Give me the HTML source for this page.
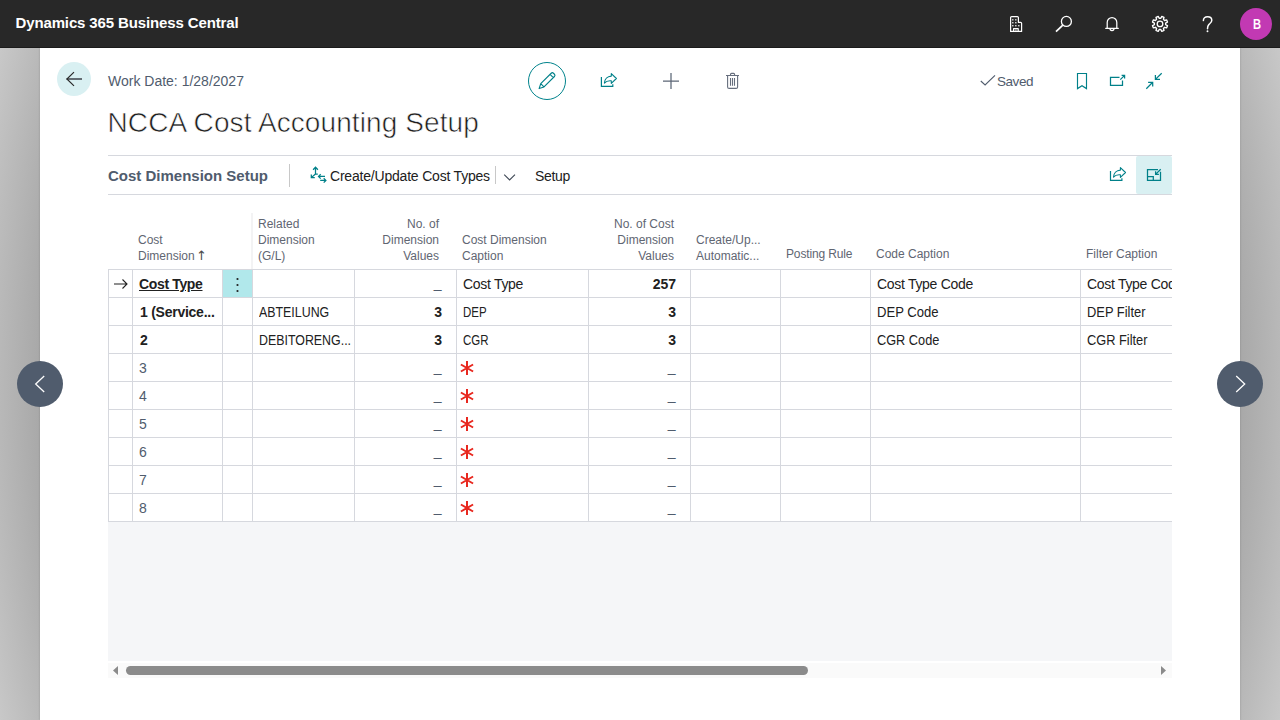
<!DOCTYPE html>
<html lang="en">
<head>
<meta charset="utf-8">
<title>NCCA Cost Accounting Setup - Dynamics 365 Business Central</title>
<style>
*{box-sizing:border-box;margin:0;padding:0}
html,body{width:1280px;height:720px;overflow:hidden}
body{position:relative;font-family:"Liberation Sans",sans-serif;font-size:14px;color:#212121;background:#b4b4b4}
.abs{position:absolute}
.t{position:absolute;white-space:nowrap;line-height:1;transform-origin:0 0}
.r{text-align:right}
#bg{left:0;top:48px;width:1280px;height:672px;
 background:radial-gradient(ellipse 680px 994px at 640px 336px,#a2a2a2 0%,#a2a2a2 86%,#a8a8a8 88.2%,#c8c8c8 100%,#cdcdcd 104%)}
#topbar{left:0;top:0;width:1280px;height:48px;background:#282828;border-bottom:1px solid #1b1b1b}
#panel{left:40px;top:48px;width:1200px;height:672px;background:#fff;box-shadow:0 0 2px rgba(0,0,0,.18)}
svg{position:absolute;overflow:visible}
.hl{background:#d6d8de;position:absolute}
.h{font-size:12px;color:#5f6672;line-height:16px;position:absolute;white-space:nowrap}
.c{font-size:14px;position:absolute;white-space:nowrap;line-height:1}
.b{font-weight:700}
.m{color:#505c6d}
.star{position:absolute;left:460px;width:14px;height:14px}
</style>
</head>
<body>
<div id="bg" class="abs"></div>
<div id="panel" class="abs"></div>
<div id="topbar" class="abs"></div>

<!-- TOPBAR -->
<div id="brand" class="t" style="left:15.5px;top:15px;font-size:15px;font-weight:700;letter-spacing:-.13px;color:#fff">Dynamics 365 Business Central</div>
<div class="abs" style="left:1240px;top:8px;width:32px;height:32px;border-radius:50%;background:#c239b3"></div>
<div id="avatar" class="t" style="left:1252.8px;top:17px;font-size:14px;font-weight:700;transform:scaleX(.8);color:#fff">B</div>

<!-- PAGE HEADER -->
<div class="abs" style="left:57px;top:62px;width:34px;height:34px;border-radius:50%;background:#d9f0f2"></div>
<div id="workdate" class="t" style="left:108px;top:74px;font-size:14px;color:#505c6d">Work Date: 1/28/2027</div>
<div id="title" class="t" style="left:107.5px;top:109px;font-size:28px;letter-spacing:.1px;color:#1e1e1e;-webkit-text-stroke:.6px #fff">NCCA Cost Accounting Setup</div>
<div class="abs" style="left:528px;top:62px;width:38px;height:38px;border-radius:50%;border:1px solid #00838c"></div>
<div id="saved" class="t" style="left:997px;top:75px;font-size:13.5px;letter-spacing:-.45px;color:#505c6d">Saved</div>

<!-- SUBHEADER -->
<div class="hl" style="left:108px;top:155px;width:1064px;height:1px"></div>
<div class="hl" style="left:108px;top:194px;width:1064px;height:1px"></div>
<div class="abs" style="left:1136px;top:156px;width:36px;height:38px;background:#d9f0f2;border-radius:2px"></div>
<div id="cds" class="t" style="left:108px;top:168px;font-size:15px;font-weight:700;color:#505c6d">Cost Dimension Setup</div>
<div class="abs" style="left:289px;top:164px;width:1px;height:23px;background:#c8c8c8"></div>
<div id="cuct" class="t" style="left:330px;top:169px;font-size:14px;letter-spacing:-.2px">Create/Update Cost Types</div>
<div class="abs" style="left:495px;top:166px;width:1px;height:18px;background:#c8c8c8"></div>
<div id="setup" class="t" style="left:535px;top:169px;font-size:14px;letter-spacing:-.3px">Setup</div>

<div id="gridwrap" class="abs" style="left:0;top:0;width:1172px;height:720px;overflow:hidden">
<div class="abs" style="left:108px;top:522px;width:1064px;height:139px;background:#f5f6f8"></div>
<div class="abs" style="left:223px;top:270px;width:29px;height:27px;background:#b1e8eb"></div>
<div class="hl" style="left:108px;top:269px;width:1064px;height:1px"></div>
<div class="hl" style="left:108px;top:297px;width:1064px;height:1px"></div>
<div class="hl" style="left:108px;top:325px;width:1064px;height:1px"></div>
<div class="hl" style="left:108px;top:353px;width:1064px;height:1px"></div>
<div class="hl" style="left:108px;top:381px;width:1064px;height:1px"></div>
<div class="hl" style="left:108px;top:409px;width:1064px;height:1px"></div>
<div class="hl" style="left:108px;top:437px;width:1064px;height:1px"></div>
<div class="hl" style="left:108px;top:465px;width:1064px;height:1px"></div>
<div class="hl" style="left:108px;top:493px;width:1064px;height:1px"></div>
<div class="hl" style="left:108px;top:521px;width:1064px;height:1px"></div>
<div class="hl" style="left:108px;top:269px;width:1px;height:253px"></div>
<div class="hl" style="left:132px;top:269px;width:1px;height:253px"></div>
<div class="hl" style="left:222px;top:269px;width:1px;height:253px"></div>
<div class="hl" style="left:252px;top:269px;width:1px;height:253px"></div>
<div class="hl" style="left:354px;top:269px;width:1px;height:253px"></div>
<div class="hl" style="left:456px;top:269px;width:1px;height:253px"></div>
<div class="hl" style="left:588px;top:269px;width:1px;height:253px"></div>
<div class="hl" style="left:690px;top:269px;width:1px;height:253px"></div>
<div class="hl" style="left:780px;top:269px;width:1px;height:253px"></div>
<div class="hl" style="left:870px;top:269px;width:1px;height:253px"></div>
<div class="hl" style="left:1080px;top:269px;width:1px;height:253px"></div>
<div class="abs" style="left:251px;top:213px;width:2px;height:56px;background:#f3f3f4"></div>
<div id="h1" class="h" style="left:138px;top:231.5px">Cost<br>Dimension <span style="font-family:DejaVu Sans,sans-serif;font-size:13px;line-height:0;color:#4a4a4a;margin-left:-2px">↑</span></div>
<div id="h2" class="h" style="left:258px;top:215.5px">Related<br>Dimension<br>(G/L)</div>
<div id="h3" class="h r" style="left:354px;width:85px;top:215.5px">No. of<br>Dimension<br>Values</div>
<div id="h4" class="h" style="left:462px;top:231.5px">Cost Dimension<br>Caption</div>
<div id="h5" class="h r" style="left:588px;width:86px;top:215.5px">No. of Cost<br>Dimension<br>Values</div>
<div id="h6" class="h" style="left:696px;top:231.5px">Create/Up...<br>Automatic...</div>
<div id="h7" class="h" style="left:786px;top:245.5px;letter-spacing:-.15px">Posting Rule</div>
<div id="h8" class="h" style="left:876px;top:245.5px">Code Caption</div>
<div id="h9" class="h" style="left:1086px;top:245.5px">Filter Caption</div>
<div id="r0a" class="c b" style="left:139px;top:277px;text-decoration:underline;letter-spacing:-.35px">Cost Type</div>
<div id="r0c" class="c r m" style="left:354px;width:87.5px;top:276px">_</div>
<div id="r0d" class="c" style="left:463px;top:277px;letter-spacing:-.3px">Cost Type</div>
<div id="r0e" class="c r b" style="left:588px;width:88px;top:277px">257</div>
<div id="r0f" class="c" style="left:877px;top:277px;letter-spacing:-.3px">Cost Type Code</div>
<div id="r0g" class="c" style="left:1087px;top:277px;letter-spacing:-.3px">Cost Type Code Filter</div>
<div id="r1a" class="c b" style="left:139px;top:305px;left:140px;letter-spacing:-.25px">1 (Service...</div>
<div id="r1b" class="c" style="left:259px;top:305px;transform:scaleX(.885);transform-origin:0 0">ABTEILUNG</div>
<div id="r1c" class="c r b" style="left:354px;width:88px;top:305px">3</div>
<div id="r1d" class="c" style="left:463px;top:305px;transform:scaleX(.82);transform-origin:0 0">DEP</div>
<div id="r1e" class="c r b" style="left:588px;width:88px;top:305px">3</div>
<div id="r1f" class="c" style="left:877px;top:305px;transform:scaleX(.935);transform-origin:0 0">DEP Code</div>
<div id="r1g" class="c" style="left:1087px;top:305px;transform:scaleX(.92);transform-origin:0 0">DEP Filter</div>
<div id="r2a" class="c b" style="left:139px;top:333px;left:140px">2</div>
<div id="r2b" class="c" style="left:259px;top:333px;transform:scaleX(.885);transform-origin:0 0">DEBITORENG...</div>
<div id="r2c" class="c r b" style="left:354px;width:88px;top:333px">3</div>
<div id="r2d" class="c" style="left:463px;top:333px;transform:scaleX(.82);transform-origin:0 0">CGR</div>
<div id="r2e" class="c r b" style="left:588px;width:88px;top:333px">3</div>
<div id="r2f" class="c" style="left:877px;top:333px;transform:scaleX(.91);transform-origin:0 0">CGR Code</div>
<div id="r2g" class="c" style="left:1087px;top:333px;transform:scaleX(.915);transform-origin:0 0">CGR Filter</div>
<div id="r3a" class="c m" style="left:139px;top:361px">3</div>
<div id="r3c" class="c r m" style="left:354px;width:87.5px;top:360px">_</div>
<svg class="star" style="top:361px" viewBox="0 0 14 14"><path d="M7 0V14M0.9 3.5L13.1 10.5M13.1 3.5L0.9 10.5" stroke="#e8281f" stroke-width="2" fill="none"/></svg>
<div id="r3e" class="c r m" style="left:588px;width:87.5px;top:360px">_</div>
<div id="r4a" class="c m" style="left:139px;top:389px">4</div>
<div id="r4c" class="c r m" style="left:354px;width:87.5px;top:388px">_</div>
<svg class="star" style="top:389px" viewBox="0 0 14 14"><path d="M7 0V14M0.9 3.5L13.1 10.5M13.1 3.5L0.9 10.5" stroke="#e8281f" stroke-width="2" fill="none"/></svg>
<div id="r4e" class="c r m" style="left:588px;width:87.5px;top:388px">_</div>
<div id="r5a" class="c m" style="left:139px;top:417px">5</div>
<div id="r5c" class="c r m" style="left:354px;width:87.5px;top:416px">_</div>
<svg class="star" style="top:417px" viewBox="0 0 14 14"><path d="M7 0V14M0.9 3.5L13.1 10.5M13.1 3.5L0.9 10.5" stroke="#e8281f" stroke-width="2" fill="none"/></svg>
<div id="r5e" class="c r m" style="left:588px;width:87.5px;top:416px">_</div>
<div id="r6a" class="c m" style="left:139px;top:445px">6</div>
<div id="r6c" class="c r m" style="left:354px;width:87.5px;top:444px">_</div>
<svg class="star" style="top:445px" viewBox="0 0 14 14"><path d="M7 0V14M0.9 3.5L13.1 10.5M13.1 3.5L0.9 10.5" stroke="#e8281f" stroke-width="2" fill="none"/></svg>
<div id="r6e" class="c r m" style="left:588px;width:87.5px;top:444px">_</div>
<div id="r7a" class="c m" style="left:139px;top:473px">7</div>
<div id="r7c" class="c r m" style="left:354px;width:87.5px;top:472px">_</div>
<svg class="star" style="top:473px" viewBox="0 0 14 14"><path d="M7 0V14M0.9 3.5L13.1 10.5M13.1 3.5L0.9 10.5" stroke="#e8281f" stroke-width="2" fill="none"/></svg>
<div id="r7e" class="c r m" style="left:588px;width:87.5px;top:472px">_</div>
<div id="r8a" class="c m" style="left:139px;top:501px">8</div>
<div id="r8c" class="c r m" style="left:354px;width:87.5px;top:500px">_</div>
<svg class="star" style="top:501px" viewBox="0 0 14 14"><path d="M7 0V14M0.9 3.5L13.1 10.5M13.1 3.5L0.9 10.5" stroke="#e8281f" stroke-width="2" fill="none"/></svg>
<div id="r8e" class="c r m" style="left:588px;width:87.5px;top:500px">_</div>
<svg style="left:114px;top:279px" width="14" height="10" viewBox="0 0 14 10"><path d="M0 5H13M8.5 0.5L13 5L8.5 9.5" fill="none" stroke="#212121" stroke-width="1.1"/></svg>
<svg style="left:236px;top:277px" width="3" height="16" viewBox="0 0 3 16"><circle cx="1.5" cy="2" r="1.1" fill="#212121"/><circle cx="1.5" cy="8" r="1.1" fill="#212121"/><circle cx="1.5" cy="14" r="1.1" fill="#212121"/></svg>
</div>
<svg style="left:0;top:0" width="1280" height="720" viewBox="0 0 1280 720"><path d="M1010.6 31.4V17.6Q1010.6 16.6 1011.6 16.6H1017.4Q1018.4 16.6 1018.4 17.6V22.3H1020.6Q1021.6 22.3 1021.6 23.3V31.4Z M1013.6 31.4V28.6H1018.2V31.4" stroke="#fff" fill="none" stroke-width="1.2" stroke-linejoin="round"/><rect x="1012.1" y="19.1" width="1.4" height="1.4" fill="#fff" opacity=".85"/><rect x="1015.1" y="19.1" width="1.4" height="1.4" fill="#fff" opacity=".85"/><rect x="1012.1" y="22.0" width="1.4" height="1.4" fill="#fff" opacity=".85"/><rect x="1015.1" y="22.0" width="1.4" height="1.4" fill="#fff" opacity=".85"/><rect x="1012.1" y="25.0" width="1.4" height="1.4" fill="#fff" opacity=".85"/><rect x="1015.1" y="25.0" width="1.4" height="1.4" fill="#fff" opacity=".85"/><rect x="1018.1" y="25.0" width="1.4" height="1.4" fill="#fff" opacity=".85"/><rect x="1015.2" y="29.4" width="1.4" height="1.4" fill="#fff" opacity=".7"/><circle cx="1066.4" cy="21.4" r="5" stroke="#fff" fill="none" stroke-width="1.3"/><path d="M1062.8 25.1L1056 31.7" stroke="#fff" fill="none" stroke-width="1.7"/><path d="M1107.2 28.3V22.4A4.8 4.8 0 0 1 1116.8 22.4V28.3 M1105.7 28.3H1118.3 M1110 28.6Q1110 30.6 1112 30.6Q1114 30.6 1114 28.6" stroke="#fff" fill="none" stroke-width="1.25" stroke-linecap="round"/><path d="M1160.84 18.26 L1161.80 16.41 L1164.02 17.33 L1163.39 19.32 L1164.58 20.51 L1166.57 19.88 L1167.49 22.10 L1165.64 23.06 L1165.64 24.74 L1167.49 25.70 L1166.57 27.92 L1164.58 27.29 L1163.39 28.48 L1164.02 30.47 L1161.80 31.39 L1160.84 29.54 L1159.16 29.54 L1158.20 31.39 L1155.98 30.47 L1156.61 28.48 L1155.42 27.29 L1153.43 27.92 L1152.51 25.70 L1154.36 24.74 L1154.36 23.06 L1152.51 22.10 L1153.43 19.88 L1155.42 20.51 L1156.61 19.32 L1155.98 17.33 L1158.20 16.41 L1159.16 18.26Z" stroke="#fff" fill="none" stroke-width="1.35" stroke-linejoin="round"/><circle cx="1160" cy="23.9" r="2.8" stroke="#fff" fill="none" stroke-width="1.3"/><path d="M1203.4 20.6C1203.3 18 1205 16.8 1207.6 16.8C1210.2 16.8 1211.8 18.3 1211.8 20.3C1211.8 22.4 1210.1 23.3 1208.8 24.6C1207.7 25.7 1207.5 26.8 1207.5 28.7" stroke="#fff" fill="none" stroke-width="1.5" stroke-linecap="round"/><circle cx="1207.5" cy="31.3" r="0.95" fill="#fff"/></svg>
<svg style="left:0;top:0" width="1280" height="720" viewBox="0 0 1280 720"><path d="M82 79H66.6" stroke="#3d4248" stroke-width="1.5" fill="none"/><path d="M74 72.1L66.9 79L74 85.9" stroke="#2b2b2b" stroke-width="1.2" fill="none"/><g transform="translate(539.1 88.6) rotate(-45)"><path d="M0 0L4.6 -2.3H19.4A1.6 1.6 0 0 1 21 -0.7V0.7A1.6 1.6 0 0 1 19.4 2.3H4.6Z M4.6 -2.3V2.3 M17.8 -2.3V2.3" stroke="#008089" fill="none" stroke-width="1.1" stroke-linejoin="round"/></g><path d="M601.4 77V86.4H612.8V84.2" stroke="#008089" fill="none" stroke-width="1.2"/><path d="M611.3 73.6L616.4 78.5L611.3 83.3V80.8C608.4 80.5 606 81.2 604.4 83.1C604.6 79 607.5 76.3 611.3 76.1Z" stroke="#008089" fill="none" stroke-width="1.1" stroke-linejoin="round"/><path d="M663 81H679M671 73V89" stroke="#5c6676" stroke-width="1.25" fill="none"/><path d="M726 75.5H739 M730.5 75.5V74.4Q730.5 73.4 731.5 73.4H733.6Q734.6 73.4 734.6 74.4V75.5 M727.6 75.5V86.9Q727.6 88.4 729.1 88.4H736.1Q737.6 88.4 737.6 86.9V75.5 M730.5 78.1V85.7M732.5 78.1V85.7M734.5 78.1V85.7" stroke="#666e7d" fill="none" stroke-width="1.1"/><path d="M980.8 81L985.1 85L995 75.3" stroke="#505c6d" stroke-width="1.1" fill="none"/><path d="M1077.5 88.6V73.5H1086.5V88.6L1082 85.8Z" stroke="#008089" fill="none" stroke-width="1.15" stroke-linejoin="miter"/><path d="M1119.5 77.4H1110.5V85.4H1122.5V80.4 M1120.3 79.6L1124.6 75.4 M1121.6 75.4H1124.6V78.4" stroke="#008089" fill="none" stroke-width="1.25"/><path d="M1161.7 73.3L1155.4 79.4 M1155.4 75V79.4H1160 M1146.3 88.7L1152.7 82.3 M1148.1 82.3H1152.7V86.6" stroke="#008089" fill="none" stroke-width="1.25"/></svg>
<svg style="left:0;top:0" width="1280" height="720" viewBox="0 0 1280 720"><path d="M315.5 167.2V174H317.8 M313.1 169.7L315.5 167.2L317.9 169.7 M315.5 174L311.3 177.6 M311.3 174.6V177.6H314.8 M325 176.4H318.5 M320.7 174.2L318.5 176.4L320.7 178.6 M320.2 180.4H325.9 M323.7 178.2L325.9 180.4L323.7 182.6" stroke="#008089" fill="none" stroke-width="1.25"/><path d="M504.2 174.6L509.6 180L515 174.6" stroke="#414a57" stroke-width="1.1" fill="none"/><g transform="translate(509.1 94)"><path d="M601.4 77V86.4H612.8V84.2" stroke="#008089" fill="none" stroke-width="1.2"/><path d="M611.3 73.6L616.4 78.5L611.3 83.3V80.8C608.4 80.5 606 81.2 604.4 83.1C604.6 79 607.5 76.3 611.3 76.1Z" stroke="#008089" fill="none" stroke-width="1.1" stroke-linejoin="round"/></g><path d="M1158 169.5H1147.5V180.3H1160.5V171.8 M1147.5 176.5H1153.3V180.3 M1160.7 169.3L1155.6 174.4 M1155.6 171.2V174.4H1158.9" stroke="#008089" fill="none" stroke-width="1.25"/></svg>
<!-- SCROLLBAR -->
<div class="abs" style="left:108px;top:663px;width:1064px;height:15px;background:#fafafa"></div>
<div class="abs" style="left:126px;top:666px;width:682px;height:9px;border-radius:4.5px;background:#8b8b8b"></div>
<svg style="left:113px;top:666px" width="5" height="9" viewBox="0 0 5 9"><path d="M5 0V9L0 4.5Z" fill="#8b8b8b"/></svg>
<svg style="left:1161px;top:666px" width="5" height="9" viewBox="0 0 5 9"><path d="M0 0V9L5 4.5Z" fill="#8b8b8b"/></svg>
<!-- NAV CIRCLES -->
<div class="abs" style="left:17px;top:361px;width:46px;height:46px;border-radius:50%;background:#505c6d"></div>
<div class="abs" style="left:1217px;top:361px;width:46px;height:46px;border-radius:50%;background:#505c6d"></div>
<svg style="left:17px;top:361px" width="46" height="46" viewBox="0 0 46 46"><path d="M27.2 15L18.7 23L27.2 31" fill="none" stroke="#fff" stroke-width="1.3"/></svg>
<svg style="left:1217px;top:361px" width="46" height="46" viewBox="0 0 46 46"><path d="M19.2 15L27.7 23L19.2 31" fill="none" stroke="#fff" stroke-width="1.3"/></svg>

</body>
</html>
